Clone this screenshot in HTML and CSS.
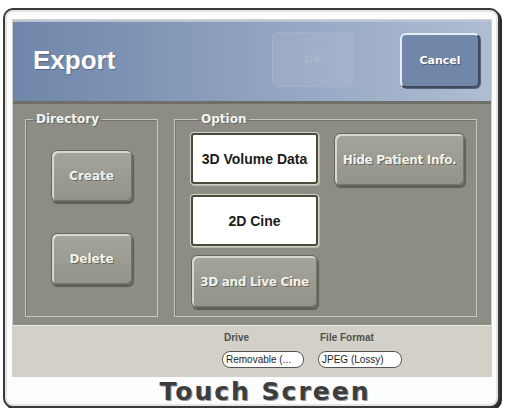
FILE: index.html
```html
<!DOCTYPE html>
<html lang="en">
<head>
    <meta charset="UTF-8">
    <meta name="viewport" content="width=device-width, initial-scale=1.0">
    <title>Export</title>
    <link rel="stylesheet" href="styles.css">
</head>
<body>
    <div class="device">
        <div class="screen">
            <!-- title bar with the dialog actions -->
            <div class="titlebar">
                <h1 class="title">Export</h1>
                <button class="btn btn-ok" disabled>OK</button>
                <button class="btn btn-cancel">Cancel</button>
            </div>

            <div class="panel">
                <fieldset class="group group-dir">
                    <legend>Directory</legend>
                    <button class="key">Create</button>
                    <button class="key">Delete</button>
                </fieldset>
                <fieldset class="group group-opt">
                    <legend>Option</legend>
                    <div class="opt-grid">
                        <button class="toggle is-on">3D Volume Data</button>
                        <button class="key key-wide">Hide Patient Info.</button>
                        <button class="toggle is-on">2D Cine</button>
                        <span></span>
                        <button class="key key-wide">3D and Live Cine</button>
                    </div>
                </fieldset>
            </div>

            <!-- drive / format selection -->
            <div class="status">
                <div class="field">
                    <span class="field-label">Drive</span>
                    <span class="combo combo-drive">Removable (...</span>
                </div>
                <div class="field">
                    <span class="field-label">File Format</span>
                    <span class="combo combo-format">JPEG (Lossy)</span>
                </div>
            </div>
        </div>
        <div class="caption">Touch Screen</div>
    </div>
</body>
</html>
```

FILE: styles.css
```css
/* page */
body {
    margin: 0;
    background: #ffffff;
    font-family: "Liberation Sans", Arial, sans-serif;
}

/* outer frame of the monitor */
.device {
    box-sizing: border-box;
    width: 497px;
    height: 400px;
    margin: 8px 0 0 3px;
    padding: 10px 7px 0 8px;
    border: 2px solid #3a3a3a;
    border-radius: 10px;
    background: #fdfdfd;
    box-shadow: 2px 2px 0 #2a2a2a, inset 0 0 0 2px #e4e4e4;
    display: flex;
    flex-direction: column;
}

.screen {
    width: 478px;
    height: 356px;
    flex: none;
    display: flex;
    flex-direction: column;
    box-shadow: 0 0 0 1px #d2d2cc;
}

/* title bar */
.titlebar {
    height: 81px;
    flex: none;
    display: flex;
    align-items: center;
    padding: 0 11px 0 20px;
    background: linear-gradient(90deg, #6f86aa 0%, #8c9fbd 45%, #aebdd2 100%);
    box-shadow: inset 0 2px 0 #b9c5d6;
    border-bottom: 3px solid #6f6f67;
}
.title {
    flex: 1;
    margin: 0;
    font-size: 26px;
    font-weight: bold;
    color: #ffffff;
    text-shadow: 1px 1px 1px rgba(60, 70, 90, .5);
}
.btn {
    box-sizing: border-box;
    height: 55px;
    font-family: "DejaVu Sans", sans-serif;
    font-weight: bold;
    font-size: 11px;
    border-radius: 6px;
    padding: 0;
}
.btn-ok {
    width: 82px;
    margin-right: 46px;
    margin-top: -2px;
    border: 1px solid #a4b3c9;
    background: rgba(255, 255, 255, .08);
    color: #aab7ca;
}
.btn-cancel {
    width: 80px;
    border: 2px solid #e8edf3;
    border-right-color: #3f4b5d;
    border-bottom-color: #3f4b5d;
    background: #7187aa;
    color: #ffffff;
    text-shadow: 1px 1px 0 #4b5870;
    box-shadow: 1px 1px 0 #55627a;
}

/* main gray panel */
.panel {
    height: 222px;
    flex: none;
    box-sizing: border-box;
    display: flex;
    gap: 16px;
    padding: 8px 14px 8px 12px;
    background: #8d8d85;
    border-bottom: 1px solid #efefe8;
}
.group {
    margin: 0;
    padding: 0;
    border: 1px solid #c6c6bd;
    box-shadow: inset 1px 1px 0 #75756d;
    min-width: 0;
}
.group legend {
    margin-left: 7px;
    padding: 0 3px;
    font-family: "DejaVu Sans", sans-serif;
    font-size: 12px;
    line-height: 14px;
    font-weight: bold;
    color: #f4f4f0;
    text-shadow: 1px 1px 0 #6a6a62;
}
.group-dir {
    width: 133px;
    box-sizing: border-box;
    display: flex;
    flex-direction: column;
    align-items: center;
    gap: 31px;
    padding-top: 24px;
}
.group-opt {
    flex: 1;
    padding: 7px 0 0 16px;
}
.opt-grid {
    display: grid;
    grid-template-columns: 127px 131px;
    column-gap: 16px;
    row-gap: 9px;
    align-items: start;
}

/* raised gray keys */
.key {
    box-sizing: border-box;
    width: 82px;
    height: 52px;
    padding: 0;
    border: 1px solid #66665e;
    border-radius: 6px;
    background: linear-gradient(180deg, #a5a59d, #939389);
    box-shadow: inset 2px 2px 0 #d8d8d0, inset -1px -1px 0 #75756c, 1px 2px 1px #5c5c54;
    font-family: "DejaVu Sans", sans-serif;
    font-size: 12px;
    font-weight: bold;
    color: #f1f1ec;
    text-shadow: 1px 1px 0 #66665e;
}
.key-wide {
    width: 100%;
    height: 53px;
    white-space: nowrap;
    letter-spacing: -0.3px;
}

/* selected option toggles */
.toggle {
    box-sizing: border-box;
    height: 51px;
    padding: 0;
    background: #ffffff;
    border: 2px solid #4b4b3b;
    border-radius: 3px;
    box-shadow: 0 0 0 1px #d0d0c6, 1px 1px 0 1px #b8b8ae;
    font-family: "Liberation Sans", Arial, sans-serif;
    font-size: 14px;
    font-weight: bold;
    color: #1c1c1c;
}

/* drive and format selection */
.status {
    flex: 1;
    display: flex;
    gap: 14px;
    padding: 6px 0 0 209px;
    background: #d3d1c7;
}
.field {
    display: flex;
    flex-direction: column;
    gap: 8px;
}
.field-label {
    font-size: 10px;
    font-weight: bold;
    color: #505050;
    padding-left: 2px;
}
.combo {
    box-sizing: border-box;
    height: 17px;
    line-height: 15px;
    padding: 0 3px;
    border: 1px solid #555555;
    border-radius: 8px;
    background: #ffffff;
    font-size: 10px;
    color: #222222;
    white-space: nowrap;
    overflow: hidden;
}
.combo-drive {
    width: 82px;
}
.combo-format {
    width: 84px;
}

/* label under the screen */
.caption {
    flex: 1;
    display: flex;
    align-items: center;
    justify-content: center;
    padding-left: 26px;
    font-family: "DejaVu Sans", sans-serif;
    font-size: 25px;
    font-weight: bold;
    letter-spacing: 2px;
    color: #3d3d3d;
    text-shadow: 1px 1px 0 #9a9a9a;
}
```
